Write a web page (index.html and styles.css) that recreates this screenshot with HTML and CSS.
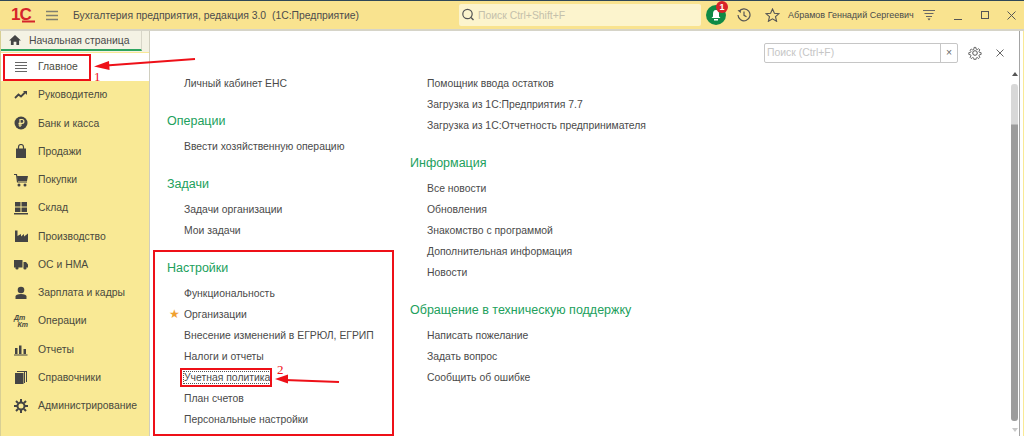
FILE: index.html
```html
<!DOCTYPE html>
<html lang="ru">
<head>
<meta charset="utf-8">
<title>Бухгалтерия предприятия</title>
<link rel="stylesheet" href="styles.css">
</head>
<body>
<div class="app">

	<!-- top bar -->
	<header class="topbar">
		<span class="logo">1С<svg class="logo-swoosh" width="13" height="3" viewBox="0 0 13 3"><path d="M0 1.500h13" stroke="#d5242b" stroke-width="2"/></svg></span>
		<svg class="burger" width="12" height="11" viewBox="0 0 12 11"><path d="M0 1.500h12M0 5.500h12M0 9.500h12" stroke="#807f70" stroke-width="1.400"/></svg>
		<span class="app-title">Бухгалтерия предприятия, редакция 3.0&nbsp; (1С:Предприятие)</span>
		<div class="global-search">
			<svg width="14" height="14" viewBox="0 0 14 14"><circle cx="6.500" cy="6" r="4.700" fill="none" stroke="#555" stroke-width="1.200"/><path d="M10 9.500l2.500 2.500" stroke="#555" stroke-width="1.400"/></svg>
			<span>Поиск Ctrl+Shift+F</span>
		</div>
		<div class="bell">
			<svg width="20" height="20" viewBox="0 0 20 20"><circle cx="10" cy="10" r="10" fill="#0f8a45"/><path d="M10 5c-2.400 0-3 2-3 4v2.500l-1.500 1.500h9l-1.500-1.500v-2.500c0-2-.6-4-3-4z" fill="#fff"/><rect x="8" y="14" width="4" height="1.500" fill="#fff"/></svg>
			<span class="bell-count">1</span>
		</div>
		<svg class="tool history" width="14" height="14" viewBox="0 0 14 14"><path d="M2 3.500A6 6 0 1 1 1 7" fill="none" stroke="#555" stroke-width="1.200"/><path d="M0.500 2l3.500.2-.3 3z" fill="#555"/><path d="M7 3.500v3.800l2.500 1.500" fill="none" stroke="#555" stroke-width="1.200"/></svg>
		<svg class="tool star-tool" width="15" height="14" viewBox="0 0 15 14"><path d="M7.500 1l1.900 4.300 4.600.4-3.500 3 1.100 4.600-4.100-2.500-4.100 2.500 1.100-4.600-3.500-3 4.600-.4z" fill="none" stroke="#555" stroke-width="1.100"/></svg>
		<span class="user-name">Абрамов Геннадий Сергеевич</span>
		<svg class="tool user-menu" width="12" height="12" viewBox="0 0 12 12"><path d="M0 1.500h12M1.500 4.500h9M3 7.500h6" stroke="#666" stroke-width="1"/><path d="M4.500 9.500h3l-1.500 2z" fill="#555"/></svg>
		<div class="win-buttons">
			<svg width="9" height="9" viewBox="0 0 9 9"><path d="M0 8.500h8" stroke="#555"/></svg>
			<svg width="9" height="9" viewBox="0 0 9 9"><rect x=".5" y=".5" width="7" height="7" fill="none" stroke="#555"/></svg>
			<svg width="9" height="9" viewBox="0 0 9 9"><path d="M.5.500l8 8M8.500.500l-8 8" stroke="#555"/></svg>
		</div>
	</header>

	<div class="workspace">

		<!-- left section menu -->
		<nav class="sidebar">
			<div class="tab-row">
				<div class="home-tab">
					<svg width="12" height="10" viewBox="0 0 13 11"><path d="M6.500 0L0 6h2v5h3V7.500h3V11h3V6h2z" fill="#444"/></svg>
					<span>Начальная страница</span>
				</div>
			</div>
			<ul class="sections">
				<li class="section section-active">
					<svg width="14" height="14" viewBox="0 0 14 14"><path d="M1 2.500h12M1 5.500h12M1 8.500h12M1 11.500h12" stroke="#666"/></svg>
					Главное
				</li>
				<li class="section">
					<svg width="14" height="14" viewBox="0 0 14 14"><path d="M1 10l3.500-3.500 2.500 2L11 4.500" fill="none" stroke="#444" stroke-width="1.800"/><path d="M9 3h4v4z" fill="#444"/></svg>
					Руководителю
				</li>
				<li class="section">
					<svg width="14" height="14" viewBox="0 0 14 14"><circle cx="7" cy="7" r="6.500" fill="#444"/><path d="M6 11V3.500h2a1.900 1.900 0 0 1 0 3.800H4.500M4.500 9H8" fill="none" stroke="#f9e995" stroke-width="1.200"/></svg>
					Банк и касса
				</li>
				<li class="section">
					<svg width="14" height="14" viewBox="0 0 14 14"><path d="M2 4.500h10V14H2z" fill="#444"/><path d="M4.500 7V3a2.500 2.500 0 0 1 5 0v4" fill="none" stroke="#444" stroke-width="1.200"/></svg>
					Продажи
				</li>
				<li class="section">
					<svg width="14" height="14" viewBox="0 0 14 14"><path d="M0 1.500h2.500l1 7.500H13" fill="none" stroke="#444" stroke-width="1.200"/><path d="M3 3h11l-1 5H3.500z" fill="#444"/><circle cx="5" cy="12" r="1.500" fill="#444"/><circle cx="11" cy="12" r="1.500" fill="#444"/></svg>
					Покупки
				</li>
				<li class="section">
					<svg width="14" height="14" viewBox="0 0 14 14"><path d="M1 1h5.500v4.500H1zM7.500 1H13v4.500H7.500zM1 6.500h5.500V11H1zM7.500 6.500H13V11H7.500zM0 12h14v1.500H0z" fill="#444"/></svg>
					Склад
				</li>
				<li class="section">
					<svg width="14" height="14" viewBox="0 0 14 14"><path d="M1 13V1.500h2.500V7L7 5v2.500L10 5v2.500L14 4.500V13z" fill="#444"/></svg>
					Производство
				</li>
				<li class="section">
					<svg width="14" height="14" viewBox="0 0 14 14"><path d="M0 3h8.500v7.500H0zM9.500 5H12l2 2.500v3H9.500z" fill="#444"/><circle cx="3" cy="11" r="1.600" fill="#444"/><circle cx="11" cy="11" r="1.600" fill="#444"/></svg>
					ОС и НМА
				</li>
				<li class="section">
					<svg width="14" height="14" viewBox="0 0 14 14"><circle cx="7" cy="4" r="3.300" fill="#444"/><path d="M1.500 13v-2.500c0-1.500 2-2.500 5.500-2.500s5.500 1 5.500 2.500V13z" fill="#444"/></svg>
					Зарплата и кадры
				</li>
				<li class="section">
					<span class="dt-kt"><i>Дт</i><i>Кт</i></span>
					Операции
				</li>
				<li class="section">
					<svg width="14" height="14" viewBox="0 0 14 14"><path d="M1 6h2.500v6H1zM5 3.500h2.500V12H5zM9.500 7H12v5H9.500zM0 12.500h13.500v1H0z" fill="#444"/></svg>
					Отчеты
				</li>
				<li class="section">
					<svg width="14" height="14" viewBox="0 0 14 14"><path d="M1 3h8.500v11H1z" fill="#444"/><path d="M10.500 2v11M12.500 1v11M3 1.500h9.500" fill="none" stroke="#444"/></svg>
					Справочники
				</li>
				<li class="section">
					<svg width="14" height="14" viewBox="0 0 14 14"><circle cx="7" cy="7" r="3.500" fill="none" stroke="#444" stroke-width="2"/><path d="M7 0v3M7 11v3M0 7h3M11 7h3M2 2l2 2M10 10l2 2M12 2l-2 2M4 10l-2 2" stroke="#444" stroke-width="2"/></svg>
					Администрирование
				</li>
			</ul>
		</nav>

		<!-- page with commands -->
		<main class="panel">
			<div class="panel-tools">
				<div class="panel-search">
					<span class="panel-search-text">Поиск (Ctrl+F)</span>
					<span class="panel-search-clear">×</span>
				</div>
				<svg class="gear" width="14" height="14" viewBox="0 0 14 14"><circle cx="7" cy="7" r="2.300" fill="none" stroke="#555"/><path d="M6 .7h2l.3 1.900 1.300.6 1.600-1.100 1.400 1.400-1.100 1.600.6 1.300 1.900.3v2l-1.900.3-.6 1.300 1.100 1.600-1.400 1.400-1.600-1.100-1.300.6-.3 1.900H6l-.3-1.900-1.300-.6-1.600 1.100-1.400-1.400 1.100-1.600-.6-1.300-1.900-.3v-2l1.900-.3.6-1.300L1.400 3.900l1.400-1.400 1.600 1.100 1.300-.6z" fill="none" stroke="#555" transform="translate(.8 .8) scale(.88)"/></svg>
				<svg class="panel-close" width="8" height="8" viewBox="0 0 8 8"><path d="M.5.500l7 7M7.500.500l-7 7" stroke="#666"/></svg>
			</div>
			<div class="panel-body">
				<div class="col col-left">
					<a class="cmd">Личный кабинет ЕНС</a>
					<h2>Операции</h2>
					<a class="cmd">Ввести хозяйственную операцию</a>
					<h2>Задачи</h2>
					<a class="cmd">Задачи организации</a>
					<a class="cmd">Мои задачи</a>
					<h2>Настройки</h2>
					<a class="cmd">Функциональность</a>
					<a class="cmd cmd-fav">Организации</a>
					<a class="cmd">Внесение изменений в ЕГРЮЛ, ЕГРИП</a>
					<a class="cmd">Налоги и отчеты</a>
					<a class="cmd"><span class="focused">Учетная политика</span></a>
					<a class="cmd">План счетов</a>
					<a class="cmd">Персональные настройки</a>
				</div>
				<div class="col col-right">
					<a class="cmd">Помощник ввода остатков</a>
					<a class="cmd">Загрузка из 1С:Предприятия 7.7</a>
					<a class="cmd">Загрузка из 1С:Отчетность предпринимателя</a>
					<h2>Информация</h2>
					<a class="cmd">Все новости</a>
					<a class="cmd">Обновления</a>
					<a class="cmd">Знакомство с программой</a>
					<a class="cmd">Дополнительная информация</a>
					<a class="cmd">Новости</a>
					<h2>Обращение в техническую поддержку</h2>
					<a class="cmd">Написать пожелание</a>
					<a class="cmd">Задать вопрос</a>
					<a class="cmd">Сообщить об ошибке</a>
				</div>
			</div>
			<div class="scrollbar">
				<span class="scroll-up"></span>
				<span class="scroll-thumb"></span>
				<span class="scroll-down"></span>
			</div>
		</main>
	</div>

	<!-- red callouts drawn over the window -->
	<div class="mark mark-main"></div>
	<div class="mark mark-settings"></div>
	<div class="mark mark-policy"></div>
	<span class="mark-num num-1">1</span>
	<span class="mark-num num-2">2</span>
	<svg class="arrows" width="1024" height="436" viewBox="0 0 1024 436">
		<path d="M195 59L106 65.500" stroke="#ee1018" stroke-width="2"/>
		<path d="M94 66.500l15-5.500.6 9z" fill="#ee1018"/>
		<path d="M339 382L285 380" stroke="#ee1018" stroke-width="2"/>
		<path d="M275 379l13-4.500v9z" fill="#ee1018"/>
	</svg>
</div>
</body>
</html>
```

FILE: styles.css
```css
* {
	box-sizing: border-box;
}

html, body {
	margin: 0;
	height: 100%;
	overflow: hidden;
}

body {
	font-family: "Liberation Sans", Arial, sans-serif;
	font-size: 10.400px;
	color: #4a4a4a;
	background: #f9e995;
}

.app {
	position: relative;
	width: 1024px;
	height: 436px;
	overflow: hidden;
	display: flex;
	flex-direction: column;
	border-top: 1px solid #2f4858;
}

/* top bar */
.topbar {
	height: 30px;
	flex: none;
	display: flex;
	align-items: center;
	background: #f9e38f;
	border-bottom: 2px solid #d6d4c8;
}

.topbar > * {
	flex: none;
}

.logo {
	position: relative;
	width: 46px;
	padding-left: 11px;
	font: bold 17px "Liberation Sans", sans-serif;
	letter-spacing: -1px;
	color: #d5242b;
}

.logo-swoosh {
	position: absolute;
	left: 22px;
	bottom: 2px;
}

.burger {
	margin-right: 15px;
}

.app-title {
	width: 386px;
	color: #4c4c4c;
	font-size: 10.400px;
	white-space: nowrap;
}

.global-search {
	width: 242px;
	height: 22px;
	display: flex;
	align-items: center;
	gap: 3px;
	padding-left: 2px;
	background: #fcf4cd;
	color: #c4c0ab;
	font-size: 10.400px;
	border-radius: 2px;
}

.bell {
	position: relative;
	margin-left: 5px;
	height: 20px;
}

.bell-count {
	position: absolute;
	top: -4px;
	left: 10px;
	width: 12px;
	height: 12px;
	border-radius: 50%;
	background: #d8232a;
	color: #fff;
	font: bold 9px/12px "Liberation Sans", sans-serif;
	text-align: center;
}

.history {
	margin-left: 11px;
}

.star-tool {
	margin-left: 14px;
}

.user-name {
	margin-left: 8px;
	width: 135px;
	font-size: 9px;
	white-space: nowrap;
}

.win-buttons {
	margin-left: 19px;
	display: flex;
	gap: 17.500px;
}

/* layout under the top bar */
.workspace {
	flex: 1;
	display: flex;
	min-height: 0;
}

.sidebar {
	width: 149px;
	flex: none;
	background: #f9e995;
	border-left: 1px solid #d8cf94;
}

.tab-row {
	height: 21px;
	background: #f4f2e4;
}

.home-tab {
	height: 20px;
	width: 141px;
	display: flex;
	align-items: center;
	gap: 8px;
	padding-left: 8px;
	border-right: 1px solid #d8d6c8;
	border-bottom: 2px solid #2fa560;
}

.sections {
	list-style: none;
	margin: 0;
	padding: 0.600px 0 0;
}

.section {
	height: 28.250px;
	display: flex;
	align-items: center;
	gap: 10px;
	padding-left: 13px;
	color: #4a4a3e;
}

.section svg {
	flex: none;
}

.section-active {
	background: #fff;
}

.dt-kt {
	width: 14px;
	height: 14px;
	font-size: 7px;
	line-height: 7px;
	font-weight: bold;
	flex: none;
}

.dt-kt i {
	display: block;
}

.dt-kt i + i {
	text-align: right;
}

/* page with commands */
.panel {
	position: relative;
	flex: 1;
	margin-right: 1px;
	padding-right: 3px;
	background: #fff;
	border-left: 1px solid #d0cebf;
	display: flex;
	flex-direction: column;
}

.panel::after {
	content: "";
	position: absolute;
	top: 0;
	right: 3px;
	bottom: 0;
	width: 1px;
	background: #a4a4a4;
}

.panel-tools {
	height: 42px;
	flex: none;
	display: flex;
	align-items: center;
	padding: 0 0 0 614px;
}

.panel-search {
	width: 194px;
	height: 20px;
	margin-top: 1px;
	display: flex;
	border: 1px solid #c6c6c6;
	border-radius: 2px;
	color: #c6c6c6;
}

.panel-search-text {
	flex: 1;
	padding: 3px 2px;
}

.panel-search-clear {
	width: 17px;
	border-left: 1px solid #c6c6c6;
	text-align: center;
	color: #666;
	line-height: 17px;
}

.gear {
	margin-left: 10px;
	margin-top: 1px;
}

.panel-close {
	margin-left: 14px;
	margin-top: 1px;
}

.panel-body {
	flex: 1;
	display: flex;
	padding-left: 17px;
}

.col-left {
	width: 243px;
}

.cmd {
	display: block;
	height: 21px;
	line-height: 21px;
	padding-left: 17px;
	color: #4a4a4a;
	white-space: nowrap;
}

.col h2 {
	margin: 0;
	height: 42px;
	padding-top: 15px;
	line-height: 24px;
	font-size: 12.500px;
	font-weight: normal;
	color: #21a05c;
}

.cmd-fav {
	position: relative;
}

.cmd-fav::before {
	content: "★";
	position: absolute;
	left: 2px;
	color: #f0a030;
	font-size: 12px;
}

.focused {
	outline: 1px dotted #555;
}

.scrollbar {
	position: absolute;
	top: 41px;
	right: 5px;
	width: 7px;
	bottom: 0;
}

.scroll-up,
.scroll-down {
	display: block;
	width: 0;
	margin: 0 auto;
	border: 3px solid transparent;
}

.scroll-up {
	border-top: 0;
	border-bottom: 4px solid #555;
}

.scroll-down {
	margin-top: 7px;
	border-bottom: 0;
	border-top: 4px solid #c8c8c8;
}

/* thumb is pale at the head, dark below it */
.scroll-thumb {
	display: block;
	height: 337px;
	margin-top: 8px;
	background: linear-gradient(#d8d8d8 40px, #9c9c9c 41px);
	border-radius: 3px;
}

/* red callouts */
.mark {
	position: absolute;
	border: 2px solid #ee1018;
}

.mark-main {
	left: 3px;
	top: 53px;
	width: 88px;
	height: 27px;
}

.mark-settings {
	left: 153px;
	top: 249px;
	width: 241px;
	height: 186px;
}

.mark-policy {
	left: 180px;
	top: 367px;
	width: 92px;
	height: 19px;
}

.mark-num {
	position: absolute;
	font: 13px "Liberation Serif", serif;
	color: #ee1018;
}

.num-1 {
	left: 94px;
	top: 68px;
}

.num-2 {
	left: 277px;
	top: 361px;
}

.arrows {
	position: absolute;
	left: 0;
	top: -1px;
}
```
